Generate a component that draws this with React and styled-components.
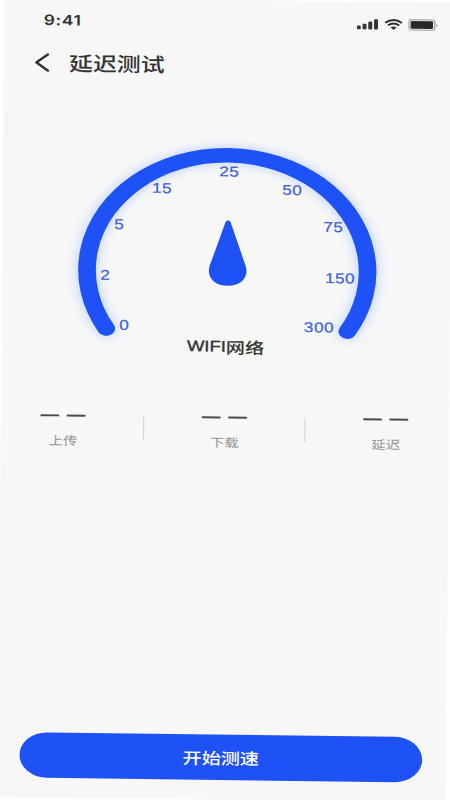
import React from "react";
import styled, { createGlobalStyle } from "styled-components";

const BLUE = "#1f52f6";
const INK = "#333333";
const CJK = `"Noto Sans CJK SC", sans-serif`;

const GlobalStyle = createGlobalStyle`
  * { box-sizing: border-box; }
  body { margin: 0; background: #ffffff; }
`;

const Stage = styled.main`
  width: 450px;
  height: 800px;
  overflow: hidden;
  background: #ffffff;
`;

const Screen = styled.div`
  width: 375px;
  height: 812px;
  display: flex;
  flex-direction: column;
  background: #f7f7f7;
  color: ${INK};
  font-family: ${CJK};
  transform-origin: 0 0;
  transform: matrix(1.195, 0.0152, -0.0085, 0.985, 4.5, -3);
`;

const StatusBar = styled.header`
  height: 46px;
  display: flex;
  align-items: center;
  justify-content: space-between;
  padding: 0 12px 0 33px;
`;

const Clock = styled.time`
  font: 600 14.6px/20px Inter, sans-serif;
  letter-spacing: 0.6px;
`;

const StatusIcons = styled.div`
  display: flex;
  align-items: center;
  gap: 5px;
  margin-bottom: 1px;
  svg { display: block; }
`;

const NavBar = styled.nav`
  height: 39px;
  display: flex;
  align-items: center;
  padding-left: 26px;
`;

const BackButton = styled.button`
  width: 12px;
  height: 20px;
  padding: 0;
  border: 0;
  background: none;
  svg { display: block; }
`;

const Title = styled.h1`
  margin: 0 0 0 16.5px;
  font-size: 20px;
  font-weight: 500;
  line-height: 30px;
`;

const GaugePanel = styled.section`
  height: 327px;
  display: flex;
  flex-direction: column;
  align-items: center;
  padding-top: 45px;
`;

const Dial = styled.svg`
  display: block;
  width: 375px;
  height: 210px;
  overflow: visible;
  flex: none;
`;

const DialLabel = styled.text`
  font: 400 14.4px "Liberation Sans", sans-serif;
  letter-spacing: 0.4px;
  fill: #3f60d3;
  stroke: #3f60d3;
  stroke-width: 0.2px;
  text-anchor: middle;
`;

const NetworkName = styled.p`
  display: flex;
  margin: 0;
  font: 500 16px/24px ${CJK};
`;

const Latin = styled.span`
  font-family: "Liberation Sans", sans-serif;
  font-size: 15.4px;
  -webkit-text-stroke: 0.4px currentColor;
`;

const Stats = styled.section`
  display: flex;
  justify-content: space-between;
  padding: 0 15.3px 0 14.7px;
  height: 50px;
`;

const Stat = styled.div`
  width: 75px;
  display: flex;
  flex-direction: column;
  align-items: center;
  padding-top: 11.3px;
`;

const EmptyValue = styled.div`
  display: flex;
  gap: 5.4px;
`;

const Dash = styled.span`
  width: 16.3px;
  height: 1.7px;
  border-radius: 1px;
  background: #4b4b4b;
`;

const StatLabel = styled.span`
  margin-top: 14.7px;
  font-size: 12px;
  line-height: 18px;
  color: #929292;
`;

const Divider = styled.span`
  width: 1px;
  height: 24px;
  margin-top: 11.5px;
  background: #d6d6d6;
`;

const Footer = styled.footer`
  margin-top: auto;
  padding: 0 20px 20.3px 18px;
`;

const StartButton = styled.button`
  display: block;
  width: 100%;
  height: 46px;
  border: 0;
  padding: 0;
  border-radius: 23px;
  background: ${BLUE};
  color: #ffffff;
  font: 500 16px/46px ${CJK};
`;

const ARC = "M87.5 335.2A117.4 117.4 0 1 1 289.3 335.2";

const ticks = [
  ["0", 102.6, 331.2],
  ["2", 86.4, 280.7],
  ["5", 97.7, 229.2],
  ["15", 133.3, 191.9],
  ["25", 189.3, 174.2],
  ["50", 242.2, 192.2],
  ["75", 276.8, 229.2],
  ["150", 282.8, 281.2],
  ["300", 265.5, 331.3],
];

const stats = ["上传", "下载", "延迟"];

function Gauge() {
  return (
    <Dial viewBox="0 130 375 210">
      <defs>
        <filter id="glow" x="-20%" y="-20%" width="140%" height="140%">
          <feGaussianBlur stdDeviation="5" />
        </filter>
      </defs>
      <path d={ARC} fill="none" stroke="#9fc0ff" strokeOpacity=".65" strokeWidth="17" strokeLinecap="round" filter="url(#glow)" />
      <path d={ARC} fill="none" stroke={BLUE} strokeWidth="14.8" strokeLinecap="round" />
      {ticks.map(([label, x, y]) => (
        <DialLabel key={label} x={x} y={y + 5}>{label}</DialLabel>
      ))}
      <path d="M186.7 225.3Q188.7 222 190.7 225.3L203.6 269.5C207 282 199.5 290.3 188.7 290.3S170.4 282 173.8 269.5Z" fill={BLUE} />
    </Dial>
  );
}

export default function App() {
  return (
    <>
      <GlobalStyle />
      <Stage>
        <Screen>
          <StatusBar>
            <Clock>9:41</Clock>
            <StatusIcons>
              <svg width="18" height="12" viewBox="0 0 18 12" fill={INK}>
                <rect x="0" y="7.3" width="3.3" height="3.9" rx="1" />
                <rect x="4.8" y="5.5" width="3.3" height="5.7" rx="1" />
                <rect x="9.6" y="3.2" width="3.3" height="8" rx="1" />
                <rect x="14.4" y=".8" width="3.3" height="10.4" rx="1" />
              </svg>
              <svg width="15.5" height="12" viewBox="0 0 15.5 12" fill="none" stroke={INK} strokeWidth="1.9">
                <path d="M.7 4.3Q7.75-1.8 14.8 4.3" />
                <path d="M3.1 6.8Q7.75 2.9 12.4 6.8" />
                <path d="M5.2 8.8Q7.75 6.9 10.3 8.8L7.75 11.4Z" fill={INK} stroke="none" />
              </svg>
              <svg width="25" height="12" viewBox="0 0 25 12">
                <rect x=".6" y=".6" width="21.6" height="10.8" rx="2.6" fill="none" stroke="#aaaaaa" strokeWidth="1.3" />
                <rect x="2" y="2" width="18.8" height="8" rx="1.3" fill="#292929" />
                <path d="M23.4 4.2Q25.8 6 23.4 7.8Z" fill="#aaaaaa" />
              </svg>
            </StatusIcons>
          </StatusBar>
          <NavBar>
            <BackButton aria-label="返回">
              <svg width="12" height="20" viewBox="0 0 12 20" fill="none" stroke={INK} strokeWidth="2.3" strokeLinecap="round" strokeLinejoin="round">
                <path d="M10.8 1.8 1.2 10l9.6 8.2" />
              </svg>
            </BackButton>
            <Title>延迟测试</Title>
          </NavBar>
          <GaugePanel>
            <Gauge />
            <NetworkName><Latin>WIFI</Latin>网络</NetworkName>
          </GaugePanel>
          <Stats>
            {stats.map((label, i) => (
              <React.Fragment key={label}>
                {i > 0 && <Divider />}
                <Stat>
                  <EmptyValue><Dash /><Dash /></EmptyValue>
                  <StatLabel>{label}</StatLabel>
                </Stat>
              </React.Fragment>
            ))}
          </Stats>
          <Footer>
            <StartButton>开始测速</StartButton>
          </Footer>
        </Screen>
      </Stage>
    </>
  );
}
